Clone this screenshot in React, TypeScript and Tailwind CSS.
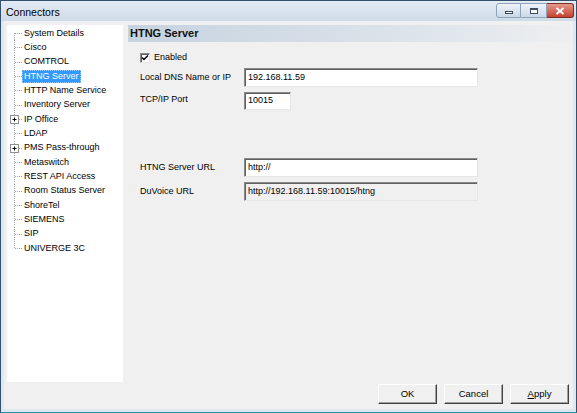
import React from "react";

const items: { label: string; plus?: boolean; selected?: boolean }[] = [
  { label: "System Details" },
  { label: "Cisco" },
  { label: "COMTROL" },
  { label: "HTNG Server", selected: true },
  { label: "HTTP Name Service" },
  { label: "Inventory Server" },
  { label: "IP Office", plus: true },
  { label: "LDAP" },
  { label: "PMS Pass-through", plus: true },
  { label: "Metaswitch" },
  { label: "REST API Access" },
  { label: "Room Status Server" },
  { label: "ShoreTel" },
  { label: "SIEMENS" },
  { label: "SIP" },
  { label: "UNIVERGE 3C" },
];

function TreeRow({ item, first, last }: { item: (typeof items)[number]; first: boolean; last: boolean }) {
  const h = 14.33;
  return (
    <div className="flex h-[14.33px] items-center">
      <svg width="15" height={h} className="shrink-0" viewBox={`0 0 15 ${h}`}>
        <line x1="7.5" y1={first ? 7 : 0} x2="7.5" y2={last ? 7 : h} stroke="#a0a0a0" strokeDasharray="1 1" />
        <line x1="8" y1="7.5" x2="15" y2="7.5" stroke="#a0a0a0" strokeDasharray="1 1" />
        {item.plus && (
          <g>
            <rect x="3.5" y="3.5" width="8" height="8" fill="#ffffff" stroke="#919191" />
            <line x1="5.5" y1="7.5" x2="9.5" y2="7.5" stroke="#000" />
            <line x1="7.5" y1="5.5" x2="7.5" y2="9.5" stroke="#000" />
          </g>
        )}
      </svg>
      <span
        className={
          item.selected
            ? "bg-[#3399ff] text-white px-[2px] leading-[13px] outline outline-1 outline-dotted outline-[#99ccff] -outline-offset-1"
            : "px-[2px] leading-[13px] text-black"
        }
      >
        {item.label}
      </span>
    </div>
  );
}

const sunken =
  "border border-t-[#8a8a8a] border-l-[#8a8a8a] border-b-[#e6e6e6] border-r-[#e6e6e6] shadow-[inset_1px_1px_0_#5f5f5f]";

function Field({ value, width, gray }: { value: string; width: string; gray?: boolean }) {
  return (
    <div className={`${sunken} ${width} h-full flex items-center pl-[3px] ${gray ? "bg-[#f0f0f0]" : "bg-white"}`}>
      <span className="text-[9px] text-black">{value}</span>
    </div>
  );
}

function Btn({ children }: { children: React.ReactNode }) {
  return (
    <div className="w-[59px] h-[20px] flex items-center justify-center bg-[#f0f0f0] border border-t-white border-l-white border-b-[#404040] border-r-[#404040] shadow-[inset_-1px_-1px_0_#a0a0a0] text-[9.5px] text-black">
      {children}
    </div>
  );
}

export default function App() {
  return (
    <div className="w-[577px] h-[413px] font-['Liberation_Sans',Arial,sans-serif] text-[9px] bg-[#dfe7f0] border border-[#34506d] border-b-[#2a8ca0] flex flex-col overflow-hidden">
      {/* Title bar */}
      <div className="h-[20px] flex items-start justify-between bg-[linear-gradient(to_bottom,#e3ebf4,#cfdbe8)] shrink-0">
        <div className="pl-[5px] pt-[4px] text-[10.5px] text-black">Connectors</div>
        <div className="flex pr-[2px] pt-[2px]">
          <div className="w-[25px] h-[15px] rounded-l-[3px] border border-[#8ea3bb] bg-[linear-gradient(to_bottom,#eef3f8,#cbd8e6)] flex items-center justify-center">
            <div className="w-[8px] h-[3px] border border-[#3c4b5c] bg-white mt-[3px]" />
          </div>
          <div className="w-[26px] h-[15px] border border-l-0 border-[#8ea3bb] bg-[linear-gradient(to_bottom,#eef3f8,#cbd8e6)] flex items-center justify-center">
            <div className="w-[8px] h-[6px] border border-[#3c4b5c] border-t-2 bg-white" />
          </div>
          <div className="w-[27px] h-[15px] rounded-r-[3px] border border-l-0 border-[#7a2e25] bg-[linear-gradient(to_bottom,#e59a8c,#c5422f)] flex items-center justify-center">
            <svg width="10" height="8" viewBox="0 0 10 8">
              <path d="M1.5 1 L8.5 7 M8.5 1 L1.5 7" stroke="#ffffff" strokeWidth="2" />
            </svg>
          </div>
        </div>
      </div>

      {/* Client */}
      <div className="flex-1 mx-[3px] mb-[3px] bg-[#f0f0f0] flex flex-col">
        <div className="flex pt-[4px] h-[361px]">
          {/* Tree */}
          <div className="ml-[3px] w-[116px] h-[357px] bg-white pt-[1px] shrink-0">
            {items.map((it, i) => (
              <TreeRow key={it.label} item={it} first={i === 0} last={i === items.length - 1} />
            ))}
          </div>
          {/* Right */}
          <div className="ml-[5px] flex-1 flex flex-col">
            <div className="h-[17px] flex items-center pl-[2px] bg-[linear-gradient(to_right,#c6d3e0,#dde4eb_65%,#eeeff0)] text-[11px] font-bold text-[#111]">
              HTNG Server
            </div>
            <div className="pl-[12px] flex flex-col">
              <div className="mt-[11px] h-[10px] flex items-center">
                <div className={`${sunken} w-[10px] h-[10px] bg-white flex items-center justify-center`}>
                  <svg width="8" height="8" viewBox="0 0 8 8">
                    <path d="M1 3.5 L3 5.5 L7 1.5" stroke="#000" strokeWidth="1.5" fill="none" />
                  </svg>
                </div>
                <span className="ml-[4px] text-[9px]">Enabled</span>
              </div>
              <div className="mt-[5px] flex items-center h-[19px]">
                <span className="w-[104px]">Local DNS Name or IP</span>
                <Field value="192.168.11.59" width="w-[234px]" />
              </div>
              <div className="mt-[5px] flex items-center h-[18px]">
                <span className="w-[104px] -mt-[3px]">TCP/IP Port</span>
                <Field value="10015" width="w-[47px]" />
              </div>
              <div className="mt-[48px] flex items-center h-[19px]">
                <span className="w-[104px]">HTNG Server URL</span>
                <Field value="http://" width="w-[234px]" />
              </div>
              <div className="mt-[5px] flex items-center h-[19px]">
                <span className="w-[104px]">DuVoice URL</span>
                <Field value="http://192.168.11.59:10015/htng" width="w-[234px]" gray />
              </div>
            </div>
          </div>
        </div>
        <div className="flex justify-end gap-[7px] pr-[4px] pt-[2px]">
          <Btn>OK</Btn>
          <Btn>Cancel</Btn>
          <Btn>
            <span>
              <span className="underline">A</span>pply
            </span>
          </Btn>
        </div>
      </div>
    </div>
  );
}
